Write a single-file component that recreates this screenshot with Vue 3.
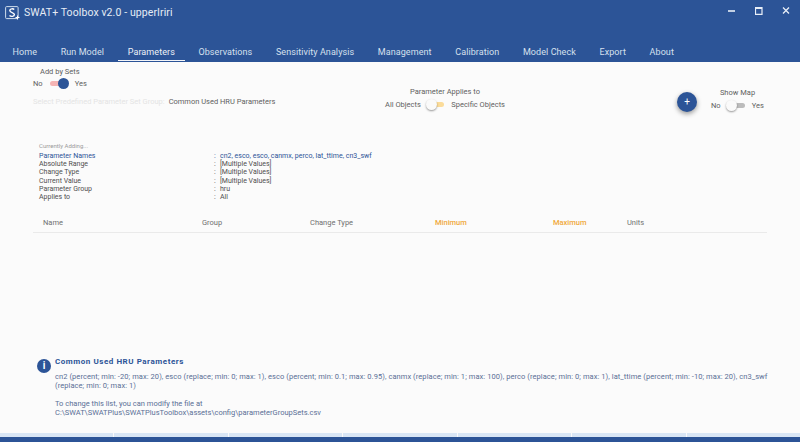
<script setup>
const tabs = ['Home', 'Run Model', 'Parameters', 'Observations', 'Sensitivity Analysis', 'Management', 'Calibration', 'Model Check', 'Export', 'About']
const details = [
  ['Absolute Range', '[Multiple Values]'],
  ['Change Type', '[Multiple Values]'],
  ['Current Value', '[Multiple Values]'],
  ['Parameter Group', 'hru'],
  ['Applies to', 'All'],
]
const segments = 7
</script>

<template>
  <div class="app">
    <header class="header">
      <div class="titlebar">
        <svg class="logo" width="15" height="14" viewBox="0 0 15 14">
          <rect x="0.6" y="0.6" width="12.5" height="12" fill="none" stroke="#cfdcec" stroke-width="1" rx="1" />
          <path d="M9.2 3.5C8.3 2.5 4.8 2.4 4.8 4.6c0 2.4 4.6 1.6 4.6 4 0 2.2-3.7 2.2-4.9.9" fill="none" stroke="#fff" stroke-width="1.4" />
          <path d="M12.5 9.5v4M10.5 11.5h4" stroke="#fff" stroke-width="1.1" />
        </svg>
        <span class="title">SWAT+ Toolbox v2.0 - upperIriri</span>
        <div class="winbtns">
          <svg width="10" height="10" viewBox="0 0 10 10"><path d="M0 5h7" stroke="#e8eef7" stroke-width="1.6" /></svg>
          <svg width="10" height="10" viewBox="0 0 10 10"><path d="M0.5 1.6H7v6.7H0.5z" fill="none" stroke="#e8eef7" stroke-width="1.2" /><path d="M0.5 2H7" stroke="#e8eef7" stroke-width="2" /></svg>
          <svg width="10" height="10" viewBox="0 0 10 10"><path d="M1 1.5l6 6M7 1.5l-6 6" stroke="#e8eef7" stroke-width="1.3" /></svg>
        </div>
      </div>
      <nav class="tabs">
        <a v-for="t in tabs" :key="t" class="tab" :class="{ active: t === 'Parameters' }">{{ t }}</a>
      </nav>
    </header>

    <main class="main">
      <section class="controls">
        <div class="sets">
          <div class="sets-head">Add by Sets</div>
          <div class="switch-row">
            <span>No</span>
            <span class="switch pink"><i class="knob blue"></i></span>
            <span>Yes</span>
          </div>
          <div class="select-row">
            <span class="faded">Select Predefined Parameter Set Group:</span>
            <span>Common Used HRU Parameters</span>
          </div>
        </div>
        <div class="applies">
          <div class="group-label">Parameter Applies to</div>
          <div class="switch-row">
            <span>All Objects</span>
            <span class="switch amber"><i class="knob off"></i></span>
            <span>Specific Objects</span>
          </div>
        </div>
        <button class="fab">+</button>
        <div class="map">
          <div class="group-label">Show Map</div>
          <div class="switch-row">
            <span>No</span>
            <span class="switch grey"><i class="knob off"></i></span>
            <span>Yes</span>
          </div>
        </div>
      </section>

      <section class="summary">
        <div class="adding">Currently Adding...</div>
        <div class="line names">
          <span class="key">Parameter Names</span>
          <span class="colon">:</span>
          <span>cn2, esco, esco, canmx, perco, lat_ttime, cn3_swf</span>
        </div>
        <div v-for="d in details" :key="d[0]" class="line">
          <span class="key">{{ d[0] }}</span>
          <span class="colon">:</span>
          <span>{{ d[1] }}</span>
        </div>
      </section>

      <section class="thead">
        <span class="c-name">Name</span>
        <span class="c-group">Group</span>
        <span class="c-type">Change Type</span>
        <span class="c-min">Minimum</span>
        <span class="c-max">Maximum</span>
        <span>Units</span>
      </section>

      <section class="info">
        <span class="info-icon">i</span>
        <div class="info-body">
          <h4>Common Used HRU Parameters</h4>
          <p class="list">cn2 (percent; min: -20; max: 20), esco (replace; min: 0; max: 1), esco (percent; min: 0.1; max: 0.95), canmx (replace; min: 1; max: 100), perco (replace; min: 0; max: 1), lat_ttime (percent; min: -10; max: 20), cn3_swf (replace; min: 0; max: 1)</p>
          <p class="gap">To change this list, you can modify the file at<br />C:\SWAT\SWATPlus\SWATPlusToolbox\assets\config\parameterGroupSets.csv</p>
        </div>
      </section>
    </main>

    <footer class="footer">
      <div class="strip">
        <span v-for="n in segments" :key="n" class="seg"></span>
      </div>
      <div class="base"></div>
    </footer>
  </div>
</template>

<style scoped>
.app {
  width: 800px;
  height: 442px;
  display: flex;
  flex-direction: column;
  overflow: hidden;
  background: #fbfbfb;
  color: #5f5f5f;
  font-family: Roboto, "Liberation Sans", sans-serif;
  font-size: 7.5px;
}
.header {
  height: 62px;
  background: #2c5497;
  color: #dfe7f2;
  display: flex;
  flex-direction: column;
  flex: none;
}
.titlebar {
  height: 42px;
  display: flex;
  align-items: flex-start;
  padding: 6px 0 0 5px;
  box-sizing: border-box;
}
.logo { flex: none; }
.title {
  margin-left: 4px;
  font-size: 10.5px;
  line-height: 13px;
  color: #e6ecf5;
  letter-spacing: 0.1px;
}
.winbtns {
  margin-left: auto;
  padding: 0 8px 0 0;
  display: flex;
  gap: 17px;
}
.tabs {
  display: flex;
  padding-left: 2.5px;
  height: 20px;
}
.tab {
  height: 19px;
  padding: 5px 10px 0;
  margin-right: 3.6px;
  font-size: 9px;
  line-height: 11px;
  letter-spacing: 0.08px;
  color: #d6e0ee;
  box-sizing: border-box;
  white-space: nowrap;
}
.tab.active {
  color: #eef2f8;
  border-bottom: 1px solid #f3f5f9;
}
.main {
  flex: 1;
  display: flex;
  flex-direction: column;
  min-height: 0;
}
.controls {
  height: 80px;
  display: flex;
  align-items: flex-start;
  flex: none;
}
.sets {
  width: 385px;
  padding: 4px 0 0 33px;
  box-sizing: border-box;
  flex: none;
}
.sets-head { margin-left: 7px; line-height: 11px; }
.switch-row {
  display: flex;
  align-items: center;
  gap: 6px;
  height: 14px;
  white-space: nowrap;
}
.sets .switch-row { margin-top: -1px; }
.select-row {
  display: flex;
  gap: 4px;
  margin-top: 7px;
}
.faded { color: #e4e4e4; }
.switch {
  position: relative;
  width: 16px;
  height: 5px;
  border-radius: 3px;
  margin: 0 1px;
}
.switch.pink { background: #f5b4b4; width: 18px; }
.switch.amber { background: #fbdc9a; margin-left: 1.5px; }
.switch.grey { background: #bcbcbc; width: 17px; margin: 0; }
.knob {
  position: absolute;
  top: -3px;
  width: 11px;
  height: 11px;
  border-radius: 50%;
}
.knob.blue { background: #2c5497; right: -1px; }
.knob.off {
  background: #fafafa;
  left: -2px;
  box-shadow: 0 1px 2px rgba(0, 0, 0, 0.4);
}
.group-label { line-height: 11px; }
.applies {
  width: 120px;
  padding-top: 24px;
  text-align: center;
  flex: none;
}
.fab {
  width: 20px;
  height: 20px;
  margin: 30px 0 0 172px;
  padding: 0;
  flex: none;
  border: 0;
  border-radius: 50%;
  background: #2c5497;
  color: #fff;
  font: 400 10px/20px Roboto, sans-serif;
  box-shadow: 0 2px 5px rgba(0, 0, 0, 0.4);
}
.map {
  margin-left: 14px;
  width: 53px;
  padding-top: 25px;
  text-align: center;
  flex: none;
}
.map .switch-row { gap: 7px; }
.summary {
  padding-left: 39px;
  flex: none;
  height: 67px;
  box-sizing: border-box;
}
.adding {
  font-size: 6px;
  line-height: 8px;
  margin-bottom: 2px;
  color: #9a9a9a;
}
.line {
  display: flex;
  line-height: 8.2px;
  font-size: 7px;
  color: #4f4f4f;
}
.line.names { color: #2c5497; }
.key { width: 175px; flex: none; }
.colon { width: 6px; flex: none; }
.thead {
  margin: 0 33px;
  height: 24px;
  padding-top: 3px;
  box-sizing: border-box;
  display: flex;
  align-items: center;
  border-bottom: 1px solid #eaeaea;
  color: #707070;
  flex: none;
}
.c-name { width: 169px; padding-left: 10px; box-sizing: border-box; }
.c-group { width: 108px; }
.c-type { width: 125px; }
.c-min { width: 118px; color: #f0a93b; font-weight: 500; }
.c-max { width: 74px; color: #f0a93b; font-weight: 500; }
.info {
  display: flex;
  margin-top: auto;
  padding: 0 28px 16.5px 37px;
  gap: 4px;
  color: #5a6f96;
  font-size: 7.5px;
}
.info-icon {
  width: 14px;
  height: 14px;
  margin-top: 3px;
  flex: none;
  border-radius: 50%;
  background: #2c5497;
  color: #fff;
  font: 700 10px/14px Roboto, sans-serif;
  text-align: center;
}
.info-body h4 {
  margin: 0 0 3.5px;
  font-size: 8px;
  line-height: 12px;
  font-weight: 700;
  color: #2c5497;
  letter-spacing: 0.55px;
}
.info-body p {
  margin: 0;
  line-height: 9px;
}
.info-body p.list { letter-spacing: 0.07px; }
.info-body p.gap { margin-top: 9px; }
.footer { flex: none; }
.strip {
  height: 4px;
  display: flex;
  gap: 1px;
}
.seg {
  flex: 1;
  background: #d9e6f5;
}
.base {
  height: 5px;
  background: #2c5497;
}
</style>

<style>
body { margin: 0; }
</style>
